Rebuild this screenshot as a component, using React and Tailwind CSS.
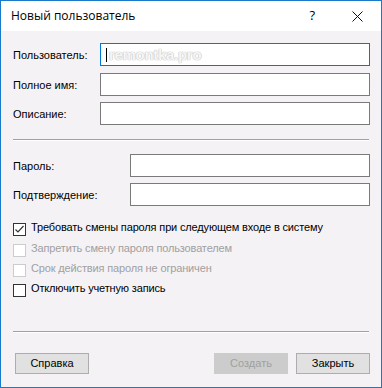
import React from 'react';

const Field = ({ label, left, mt, children }) => (
  <div className={`flex items-center h-[23px] ${mt}`}>
    <div className="shrink-0 leading-[13px] pt-[2px]" style={{ width: left }}>
      {label}
    </div>
    <div className="relative flex-1 h-[23px] bg-white border border-[#7a7a7a]">{children}</div>
  </div>
);

const Check = ({ checked, disabled, label, mt }) => (
  <div className={`flex items-start h-[13px] ${mt}`}>
    <div
      className={`w-[13px] h-[13px] shrink-0 flex items-center justify-center bg-white border ${
        disabled ? 'border-[#cccccc]' : 'border-[#333333]'
      }`}
    >
      {checked && (
        <svg width="11" height="11" viewBox="0 0 11 11">
          <path d="M1.5 5.5 L4 8 L9.5 2" fill="none" stroke="#333" strokeWidth="1.2" />
        </svg>
      )}
    </div>
    <span
      className={`ml-[5px] -mt-[1px] leading-[11px] tracking-[-0.15px] whitespace-nowrap ${
        disabled ? 'text-[#a0a0a0]' : 'text-black'
      }`}
    >
      {label}
    </span>
  </div>
);

const Btn = ({ children, disabled }) => (
  <div
    className={`w-[74px] h-[21px] flex items-center justify-center border ${
      disabled ? 'bg-[#cccccc] border-[#cccccc] text-[#a0a0a0]' : 'bg-[#e1e1e1] border-[#adadad] text-black'
    }`}
  >
    {children}
  </div>
);

export default function App() {
  return (
    <div
      className="w-[382px] h-[388px] border border-[#1979ca] bg-[#f5f2f5] flex flex-col text-[11px] text-black"
      style={{ fontFamily: '"Liberation Sans", Arial, sans-serif' }}
    >
      <div className="h-[30px] bg-white flex items-center shrink-0" style={{ fontFamily: '"Open Sans", sans-serif' }}>
        <span className="ml-[10px] text-[12px]">Новый пользователь</span>
        <span className="ml-auto text-[13px]">?</span>
        <svg className="ml-[37px] mr-[18px]" width="11" height="11" viewBox="0 0 11 11">
          <path d="M0.5 0.5 L10.5 10.5 M10.5 0.5 L0.5 10.5" stroke="#111" strokeWidth="1" />
        </svg>
      </div>

      <div className="flex flex-col pl-[12px] pr-[11px]">
        <Field label="Пользователь:" left={87} mt="mt-[12px]">
          <div className="absolute inset-0 flex items-center border border-[#0078d7] -m-px">
            <div className="ml-[5px] w-px h-[14px] bg-black" />
            <span
              className="ml-[2px] text-[15px] leading-none font-bold text-[#f6f6f6] tracking-[-0.3px]"
              style={{ textShadow: '0 0 1px #c4c4c4, 0 0 1px #c4c4c4, 0 0 1px #c4c4c4' }}
            >
              remontka.pro
            </span>
          </div>
        </Field>
        <Field label="Полное имя:" left={87} mt="mt-[7px]" />
        <Field label="Описание:" left={87} mt="mt-[6px]" />

        <div className="mt-[14px] h-px bg-[#a0a0a0] border-b border-white box-content mr-[1px]" />

        <Field label="Пароль:" left={117} mt="mt-[13px]" />
        <Field label="Подтверждение:" left={117} mt="mt-[6px]" />

        <Check checked label="Требовать смены пароля при следующем входе в систему" mt="mt-[17px]" />
        <Check disabled label="Запретить смену пароля пользователем" mt="mt-[8px]" />
        <Check disabled label="Срок действия пароля не ограничен" mt="mt-[7px]" />
        <Check label="Отключить учетную запись" mt="mt-[7px]" />

        <div className="mt-[34px] h-px bg-[#a0a0a0] border-b border-white box-content mr-[1px]" />

        <div className="mt-[20px] flex items-center pl-[2px]">
          <Btn>Справка</Btn>
          <div className="ml-auto flex gap-[8px]">
            <Btn disabled>Создать</Btn>
            <Btn>Закрыть</Btn>
          </div>
        </div>
      </div>
    </div>
  );
}
